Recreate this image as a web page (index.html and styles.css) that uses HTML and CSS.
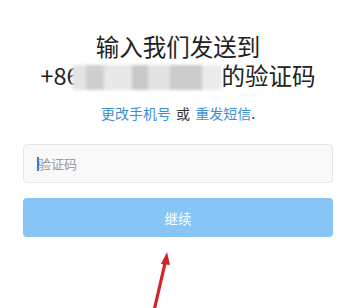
FILE: index.html
```html
<!DOCTYPE html>
<html lang="zh-CN">
<head>
    <meta charset="UTF-8">
    <meta name="viewport" content="width=device-width, initial-scale=1.0">
    <title>输入验证码</title>
    <link rel="stylesheet" href="styles.css">
</head>
<body>
    <div class="container">
        <h1 class="title">
            输入我们发送到<br>
            +86<span class="masked"><span class="cell c1"></span><span class="cell c2"></span><span class="cell c3"></span><span class="cell c4"></span><span class="cell c5"></span><span class="cell c6"></span><span class="cell c7"></span></span>的验证码
        </h1>

        <p class="links"><a href="#">更改手机号</a> 或 <a href="#">重发短信</a>.</p>

        <div class="code-input">
            <span class="caret"></span><span class="placeholder">验证码</span>
        </div>

        <button class="continue-button" disabled>继续</button>
    </div>

    <!-- annotation arrow -->
    <svg class="arrow" width="40" height="64" viewBox="0 0 40 64">
        <path d="M8 64 L21 8" stroke="#d52222" stroke-width="3.2" fill="none" stroke-linecap="round"/>
        <path d="M22 1 L16 13 L25 14 Z" fill="#d52222"/>
    </svg>
</body>
</html>
```

FILE: styles.css
```css
body { font-family: "Noto Sans CJK SC", "Noto Sans", sans-serif; margin: 0; background: #fff; }
.container { padding: 0 24px 0 23px; }
.title { font-size: 23.5px; font-weight: normal; line-height: 29px; color: #222; text-align: center; margin: 32px 0 0; }
.masked { display: inline-block; width: 150px; height: 25px; margin-left: -8px; vertical-align: -5px; filter: blur(1.5px); background: #e6e6e6; border-radius: 4px; overflow: hidden; }
.cell { display: inline-block; height: 25px; vertical-align: top; }
.c1 { width: 14px; background: #e4e4e4; }
.c2 { width: 18px; background: #cfcfcf; }
.c3 { width: 28px; background: #e8e8e8; }
.c4 { width: 16px; background: #c9c9c9; }
.c5 { width: 22px; background: #e2e2e2; }
.c6 { width: 32px; background: #cbcbcb; }
.c7 { width: 20px; background: #ebebeb; }
.links { font-size: 14px; line-height: 18px; text-align: center; color: #333; margin: 14px 0 0; word-spacing: 2px; }
.links a { color: #3b8fd6; text-decoration: none; }
.code-input { height: 37px; margin-top: 22px; border: 1px solid #e6e6e6; border-radius: 4px; background: #f9f9f9; display: flex; align-items: center; padding-left: 13px; }
.caret { width: 2px; height: 14px; background: #3a78d0; }
.placeholder { font-size: 13px; color: #9a9a9a; margin-left: -1px; }
.continue-button { display: block; width: 100%; height: 39px; margin-top: 15px; border: none; border-radius: 4px; background: #87c5f7; color: #fff; font-family: inherit; font-size: 13.5px; }
.arrow { position: absolute; left: 145px; top: 251px; }
```
